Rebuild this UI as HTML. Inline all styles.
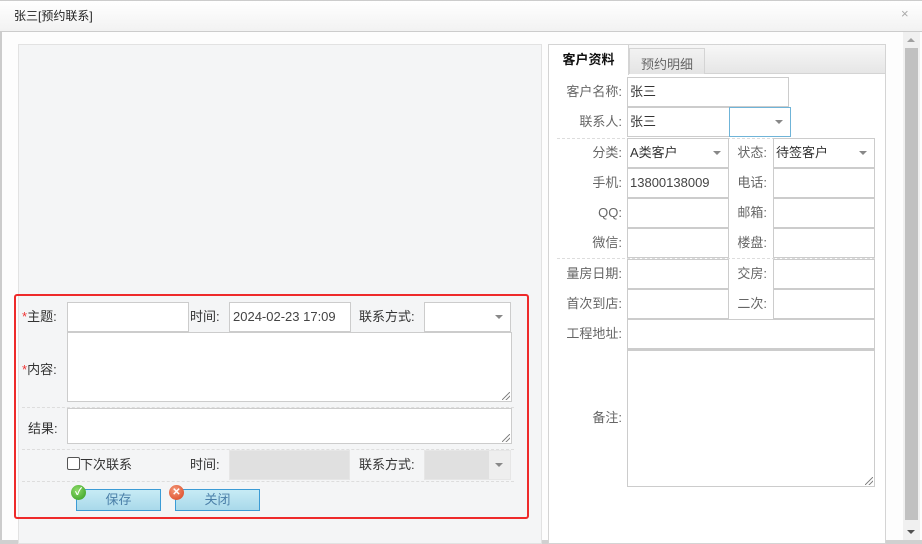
<!DOCTYPE html>
<html><head><meta charset="utf-8"><style>
*{box-sizing:border-box;margin:0;padding:0}
body{width:922px;height:544px;overflow:hidden;background:#fdfdfd;font-family:"Liberation Sans","Noto Sans CJK SC",sans-serif;font-size:13px;color:#333;position:relative}
.a{position:absolute}
.in{position:absolute;background:#fff;border:1px solid #ccc}
.lb{position:absolute;line-height:30px;white-space:nowrap}
.rl{position:absolute;text-align:right;color:#666;line-height:30px;white-space:nowrap}
.arr{position:absolute;width:0;height:0;border-left:4px solid transparent;border-right:4px solid transparent;border-top:4px solid #888}
.dash{position:absolute;height:0;border-top:1px dashed #ddd}
.txt{position:absolute;line-height:28px;padding-left:3px;white-space:nowrap}
.btn{position:absolute;height:22px;width:85px;border:1px solid #3b9bd5;background:linear-gradient(#c7ebf5,#a9d9ea);color:#4a7fa8;text-align:center;line-height:20px;font-size:13px}
.ic{position:absolute;width:15px;height:15px;border-radius:50%;color:#fff;font-size:10px;line-height:15px;text-align:center;font-weight:bold}
.grip{position:absolute;width:8px;height:8px;background:linear-gradient(135deg,transparent 45%,#888 45%,#888 55%,transparent 55%,transparent 70%,#888 70%,#888 80%,transparent 80%)}
</style></head><body>
<div class="a" style="left:0;top:0;width:922px;height:32px;background:linear-gradient(#fff,#f2f2f2);border-bottom:1px solid #ccc;border-top:1px solid #ccc"></div>
<div class="a" style="left:14px;top:7px;font-size:12px;color:#222">张三[预约联系]</div>
<div class="a" style="left:901px;top:6px;font-size:13px;color:#aaa">×</div>
<div class="a" style="left:0;top:32px;width:2px;height:512px;background:#ccc"></div>
<div class="a" style="left:0;top:540px;width:922px;height:4px;background:#d0d0d0"></div>

<!-- left panel -->
<div class="a" style="left:18px;top:44px;width:524px;height:500px;background:#f4f5f6;border:1px solid #e2e2e2"></div>
<div class="a" style="left:14px;top:294px;width:515px;height:225px;border:2px solid #ee2a2a;border-radius:3px"></div>

<div class="lb" style="left:22px;top:302px"><span style="color:#e33">*</span>主题:</div>
<div class="in" style="left:67px;top:302px;width:122px;height:30px"></div>
<div class="lb" style="left:190px;top:302px">时间:</div>
<div class="in" style="left:229px;top:302px;width:122px;height:30px"></div>
<div class="txt" style="left:230px;top:303px;color:#444">2024-02-23 17:09</div>
<div class="lb" style="left:359px;top:302px">联系方式:</div>
<div class="in" style="left:424px;top:302px;width:87px;height:30px"></div>
<div class="arr" style="left:495px;top:315px"></div>

<div class="lb" style="left:22px;top:355px"><span style="color:#e33">*</span>内容:</div>
<div class="in" style="left:67px;top:332px;width:445px;height:70px"></div>
<div class="grip" style="left:502px;top:392px"></div>
<div class="dash" style="left:22px;top:407px;width:492px"></div>
<div class="lb" style="left:28px;top:414px">结果:</div>
<div class="in" style="left:67px;top:408px;width:445px;height:36px"></div>
<div class="grip" style="left:502px;top:434px"></div>
<div class="dash" style="left:22px;top:449px;width:492px"></div>
<div class="a" style="left:67px;top:457px;width:13px;height:13px;border:1px solid #555;border-radius:2px;background:#fff"></div>
<div class="lb" style="left:80px;top:450px">下次联系</div>
<div class="lb" style="left:190px;top:450px">时间:</div>
<div class="in" style="left:229px;top:450px;width:121px;height:30px;background:#e0e0e0;border-color:#e6e6e6"></div>
<div class="lb" style="left:359px;top:450px">联系方式:</div>
<div class="in" style="left:424px;top:450px;width:87px;height:30px;background:#e0e0e0;border-color:#e6e6e6"></div>
<div class="a" style="left:489px;top:451px;width:21px;height:28px;background:#eee"></div>
<div class="arr" style="left:495px;top:463px"></div>
<div class="dash" style="left:22px;top:481px;width:492px"></div>
<div class="btn" style="left:76px;top:489px">保存</div>
<div class="ic" style="left:71px;top:485px;background:radial-gradient(circle at 40% 35%,#8fdc6a,#2f9a1e)">✓</div>
<div class="btn" style="left:175px;top:489px">关闭</div>
<div class="ic" style="left:169px;top:485px;background:radial-gradient(circle at 40% 35%,#f59a7a,#d8401c)">✕</div>

<!-- right panel -->
<div class="a" style="left:548px;top:44px;width:338px;height:500px;background:#fff;border:1px solid #d4d4d4"></div>
<div class="a" style="left:549px;top:45px;width:336px;height:29px;background:linear-gradient(#f7f7f7,#e6e6e6);border-bottom:1px solid #d4d4d4"></div>
<div class="a" style="left:549px;top:45px;width:80px;height:30px;background:#fff;border-right:1px solid #d4d4d4;font-weight:bold;color:#111;line-height:30px;text-align:center">客户资料</div>
<div class="a" style="left:629px;top:48px;width:76px;height:26px;background:linear-gradient(#f2f2f2,#e4e4e4);border:1px solid #d4d4d4;border-bottom:none;color:#666;line-height:32px;text-align:center;font-size:13px">预约明细</div>

<div class="rl" style="left:548px;width:74px;top:77px">客户名称:</div>
<div class="in" style="left:627px;top:77px;width:162px;height:30px"></div><div class="txt" style="left:627px;top:78px">张三</div>
<div class="rl" style="left:548px;width:74px;top:107px">联系人:</div>
<div class="in" style="left:627px;top:107px;width:103px;height:30px"></div><div class="txt" style="left:627px;top:108px">张三</div>
<div class="in" style="left:729px;top:107px;width:62px;height:30px;border-color:#6fb4d8"></div>
<div class="arr" style="left:775px;top:120px"></div>
<div class="dash" style="left:557px;top:138px;width:318px"></div>

<div class="rl" style="left:548px;width:74px;top:138px">分类:</div>
<div class="in" style="left:627px;top:138px;width:102px;height:30px"></div><div class="txt" style="left:627px;top:139px">A类客户</div>
<div class="arr" style="left:713px;top:151px"></div>
<div class="rl" style="left:729px;width:38px;top:138px">状态:</div>
<div class="in" style="left:773px;top:138px;width:102px;height:30px"></div><div class="txt" style="left:773px;top:139px">待签客户</div>
<div class="arr" style="left:859px;top:151px"></div>

<div class="rl" style="left:548px;width:74px;top:168px">手机:</div>
<div class="in" style="left:627px;top:168px;width:102px;height:30px"></div><div class="txt" style="left:627px;top:169px;color:#444">13800138009</div>
<div class="rl" style="left:729px;width:38px;top:168px">电话:</div>
<div class="in" style="left:773px;top:168px;width:102px;height:30px"></div>

<div class="rl" style="left:548px;width:74px;top:198px">QQ:</div>
<div class="in" style="left:627px;top:198px;width:102px;height:30px"></div>
<div class="rl" style="left:729px;width:38px;top:198px">邮箱:</div>
<div class="in" style="left:773px;top:198px;width:102px;height:30px"></div>

<div class="rl" style="left:548px;width:74px;top:228px">微信:</div>
<div class="in" style="left:627px;top:228px;width:102px;height:30px"></div>
<div class="rl" style="left:729px;width:38px;top:228px">楼盘:</div>
<div class="in" style="left:773px;top:228px;width:102px;height:30px"></div>
<div class="dash" style="left:557px;top:258px;width:318px"></div>

<div class="rl" style="left:548px;width:74px;top:259px">量房日期:</div>
<div class="in" style="left:627px;top:259px;width:102px;height:30px"></div>
<div class="rl" style="left:729px;width:38px;top:259px">交房:</div>
<div class="in" style="left:773px;top:259px;width:102px;height:30px"></div>

<div class="rl" style="left:548px;width:74px;top:289px">首次到店:</div>
<div class="in" style="left:627px;top:289px;width:102px;height:30px"></div>
<div class="rl" style="left:729px;width:38px;top:289px">二次:</div>
<div class="in" style="left:773px;top:289px;width:102px;height:30px"></div>

<div class="rl" style="left:548px;width:74px;top:319px">工程地址:</div>
<div class="in" style="left:627px;top:319px;width:248px;height:30px"></div>
<div class="rl" style="left:548px;width:74px;top:403px">备注:</div>
<div class="in" style="left:627px;top:349px;width:248px;height:138px;border-top:2px solid #ccc"></div>
<div class="grip" style="left:865px;top:477px"></div>

<!-- scrollbar -->
<div class="a" style="left:903px;top:32px;width:17px;height:508px;background:#f0f0f0"></div>
<div class="a" style="left:905px;top:48px;width:13px;height:472px;background:#c1c1c1"></div>
<div class="a" style="left:907px;top:38px;border-left:4px solid transparent;border-right:4px solid transparent;border-bottom:4px solid #a0a0a0"></div>
<div class="a" style="left:907px;top:530px;border-left:4px solid transparent;border-right:4px solid transparent;border-top:4px solid #505050"></div>
</body></html>
